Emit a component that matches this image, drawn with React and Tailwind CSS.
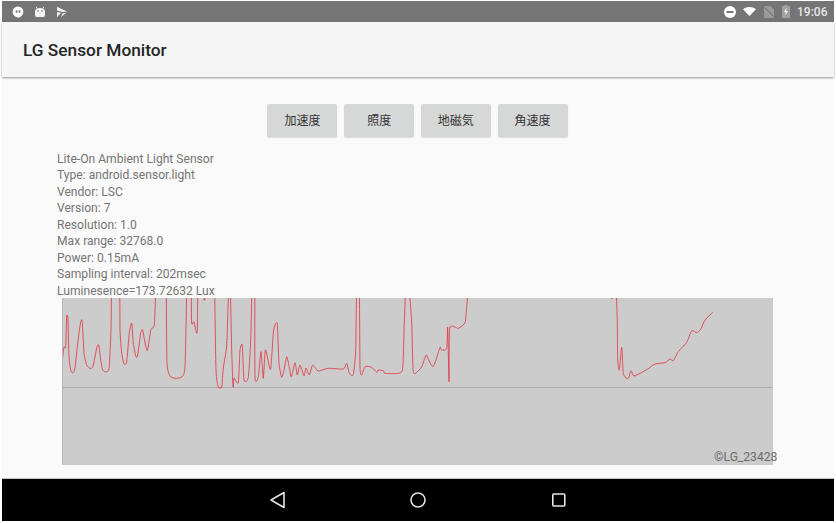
const traces = [
  "62.3,360 64,347 65.7,346.7 66.7,316 68,320 69,357 70.7,370 72.7,373 75,368 77.7,343 80.7,321.7 82.3,321.7 84,353 86.7,365 90.7,368.7 93.3,365 96.7,348 98.7,345 100.7,360 102.7,370 106.7,372 109.3,366.7 111,330 112,290 119.3,290 120,330 121.7,353 124,364 126.7,361.7 129.3,333 131.7,323 133.3,343 136,356.7 137.7,355 140.7,333 142.7,330 145,343 147.3,350.7 149.3,340 151,329 154.3,325 155.7,290",
  "166.3,290 167,363 170,376 175,378.3 181.7,377 185,366.7 186.7,290",
  "191.3,290 191.7,323.3 194,321.7 195.7,330 197.3,331.7 197.7,290",
  "203.3,296 204.3,300.5 205.7,296",
  "214.7,290 216,370 218.3,386.7 221.7,387 223.3,368 226.7,345 228.7,290 230.3,290 231.7,350 233,386.7 234,378 238.3,382.7 240,350 242.3,345 244,380 248.3,377.3 250.7,340 252,290 254.7,290 255,377 258.3,377 261,351.7 263.3,378.3 265.3,350 268,360 270.7,369.3 273.3,333.3 275,325 277.3,324.3 279,363.3 281.7,377.3 284,370 286.7,356.7 289.3,367 291.3,376.7 295,362.7 297.3,375 300,365 304,375.7 306,368 309.3,375 312.7,365 318.3,371 328.3,368.3 343.3,369 346.7,363.3 349.3,373.3 353.3,374.7 355.7,350 356.7,290 359.3,290 360,367 361.7,375 365,366.7 371.7,367.3 376.7,372.3 378.3,370 383.3,370.7 385,373.3 398.3,373.3 402.7,368.3 404.3,323.3 405.7,290 409,290 411.7,323 413.3,371.7 418.3,370.7 421.7,367 426,355 428.3,359.3 432.7,366.7 436,360 440,347.3 441.7,350 446.7,348.3 447.7,327.3 449,381.7 449.7,328.3 458.3,328.3 465,322.7 466.7,306.7 468.3,290",
  "611,296 611.7,299 612.5,296",
  "616.3,290 617.3,323.3 617.7,360 619.3,370 621.7,347.3 623.3,373.3 626.7,378.3 629,377.3 630.7,370.7 634,376 640,373.3 648.3,368.7 655,364 665,362.7 670,359 673.3,360.7 678.3,351.7 686.7,342.3 691.7,330.7 696.7,332.7 700.7,329.3 705,320 712.7,312.3",
];

// Soft Catmull-Rom curve through the traced samples
function smooth(str) {
  const p = str.split(" ").map((s) => s.split(",").map(Number));
  const k = 0.1;
  let d = `M${p[0][0]} ${p[0][1]}`;
  for (let i = 0; i < p.length - 1; i++) {
    const a = p[Math.max(i - 1, 0)];
    const b = p[i];
    const c = p[i + 1];
    const e = p[Math.min(i + 2, p.length - 1)];
    const c1 = [b[0] + (c[0] - a[0]) * k, b[1] + (c[1] - a[1]) * k];
    const c2 = [c[0] - (e[0] - b[0]) * k, c[1] - (e[1] - b[1]) * k];
    d += `C${c1[0].toFixed(1)} ${c1[1].toFixed(1)} ${c2[0].toFixed(1)} ${c2[1].toFixed(1)} ${c[0]} ${c[1]}`;
  }
  return d;
}

const info = [
  "Lite-On Ambient Light Sensor",
  "Type: android.sensor.light",
  "Vendor: LSC",
  "Version: 7",
  "Resolution: 1.0",
  "Max range: 32768.0",
  "Power: 0.15mA",
  "Sampling interval: 202msec",
  "Luminesence=173.72632 Lux",
];

const buttons = ["加速度", "照度", "地磁気", "角速度"];

function StatusLeft() {
  return (
    <div className="flex items-center ml-[9.5px] gap-[10px]">
      <svg width="12" height="12" viewBox="0 0 12 12">
        <path d="M6 .5a5.4 5.4 0 0 0-5.4 5.4A5.4 5.4 0 0 0 6 11.3V12c3-1.4 5.4-3.4 5.4-6.1A5.4 5.4 0 0 0 6 .5z" fill="#fff" />
        <rect x="3.6" y="4.3" width="1.8" height="2.4" fill="#777" />
        <rect x="6.6" y="4.3" width="1.8" height="2.4" fill="#777" />
      </svg>
      <svg width="12" height="12" viewBox="0 0 12 12">
        <path d="M1 5.5C1 3.5 3 2 6 2s5 1.5 5 3.5V9a2 2 0 0 1-2 2H3a2 2 0 0 1-2-2z" fill="#f4f4f4" />
        <path d="M3 2.5 2 .8M9 2.5 10 .8" stroke="#f4f4f4" strokeWidth="1" />
        <circle cx="4" cy="5" r=".8" fill="#777" />
        <circle cx="8" cy="5" r=".8" fill="#777" />
      </svg>
      <svg width="12" height="12" viewBox="0 0 12 12">
        <path d="M1 .8 11 5.5 6.5 6 1 4.5zM1 6l4 .8L1 11.2zM6.5 7.5 10.5 6.5 5 11z" fill="#f4f4f4" />
      </svg>
    </div>
  );
}

function StatusRight() {
  return (
    <div className="flex items-center">
      <svg width="12" height="12" viewBox="0 0 12 12">
        <circle cx="6" cy="6" r="6" fill="#fff" />
        <rect x="2.6" y="5" width="6.8" height="2" fill="#777" />
      </svg>
      <svg className="ml-[7px]" width="13" height="9" viewBox="0 0 13 9">
        <path d="M0 2.3C3.6-.7 9.4-.7 13 2.3L6.5 9z" fill="#fff" />
      </svg>
      <svg className="ml-[8px]" width="10" height="12" viewBox="0 0 10 12">
        <path d="M0 0h6.5L10 3.5V12H0z" fill="#9a9a9a" />
        <path d="M1 1.5 9.5 10.5" stroke="#6a6a6a" strokeWidth="1" />
      </svg>
      <svg className="ml-[8px]" width="8" height="13" viewBox="0 0 8 13">
        <path d="M2.5 0h3v1H8v12H0V1h2.5z" fill="#a0a0a0" />
        <path d="M4.6 2.6 2 7.2h1.7l-.4 3.3L6 5.9H4.2z" fill="#f0f0f0" />
      </svg>
      <span className="ml-[7px] w-[37px] text-[12px] font-medium text-[#e6e6e6] font-['Roboto',sans-serif]">19:06</span>
    </div>
  );
}

export default function App() {
  return (
    <div className="w-[836px] h-[523px] bg-white pt-px pb-[2px] px-[2px] overflow-hidden">
      <div className="flex flex-col h-full bg-[#fafafa] font-['Roboto','Noto_Sans_CJK_JP',sans-serif]">
        <div className="flex items-center justify-between h-[21px] bg-[#757575] shrink-0">
          <StatusLeft />
          <StatusRight />
        </div>
        <header className="relative flex items-center h-[55px] pl-[21px] pt-[2px] bg-[#f5f5f5] shadow-[0_1px_2px_rgba(0,0,0,0.4)] shrink-0">
          <h1 className="text-[17.3px] font-medium text-[#262626]">LG Sensor Monitor</h1>
        </header>
        <main className="flex-1 flex flex-col min-h-0">
          <div className="flex justify-center gap-[6.7px] mt-[27px] pr-[1px]">
            {buttons.map((b) => (
              <div key={b} className="flex items-center justify-center w-[70px] h-[33px] rounded-[2px] bg-[#d6d7d7] shadow-[0_1px_1px_rgba(0,0,0,0.12)] text-[12px] text-[#333]">
                {b}
              </div>
            ))}
          </div>
          <div className="mt-[14px] ml-[55px] text-[12.1px] leading-[16.44px] text-[#757575] h-[147px]">
            {info.map((l) => (
              <div key={l}>{l}</div>
            ))}
          </div>
          <div className="relative ml-[60px] w-[711px] h-[167px] bg-[#cccccc] border-l border-[#b4b4b4]">
            <svg className="block" width="710" height="167" viewBox="63 298 710 167">
              <line x1="63" y1="387.5" x2="773" y2="387.5" stroke="#ababab" strokeWidth="1" />
              {traces.map((p, i) => (
                <path key={i} d={smooth(p)} fill="none" stroke="#e2303c" strokeWidth="0.8" strokeLinejoin="round" />
              ))}
            </svg>
            <span className="absolute left-[651px] top-[151px] text-[12.1px] leading-[16px] text-[#6b6b6b] whitespace-nowrap">©LG_23428</span>
          </div>
        </main>
        <nav className="flex items-center h-[43px] bg-black border-t border-[#c4c4c4] shrink-0 relative">
          <svg className="absolute left-[267px] top-[12px]" width="18" height="18" viewBox="0 0 18 18">
            <path d="M15 1.5V16.5L2 9z" fill="none" stroke="#e4e4e4" strokeWidth="1.6" strokeLinejoin="round" />
          </svg>
          <svg className="absolute left-[407px] top-[12px]" width="18" height="18" viewBox="0 0 18 18">
            <circle cx="9" cy="9" r="7" fill="none" stroke="#e4e4e4" strokeWidth="1.6" />
          </svg>
          <svg className="absolute left-[549px] top-[12px]" width="16" height="18" viewBox="0 0 16 18">
            <rect x="1.8" y="3" width="12" height="12" rx="1" fill="none" stroke="#e4e4e4" strokeWidth="1.6" />
          </svg>
        </nav>
      </div>
    </div>
  );
}
